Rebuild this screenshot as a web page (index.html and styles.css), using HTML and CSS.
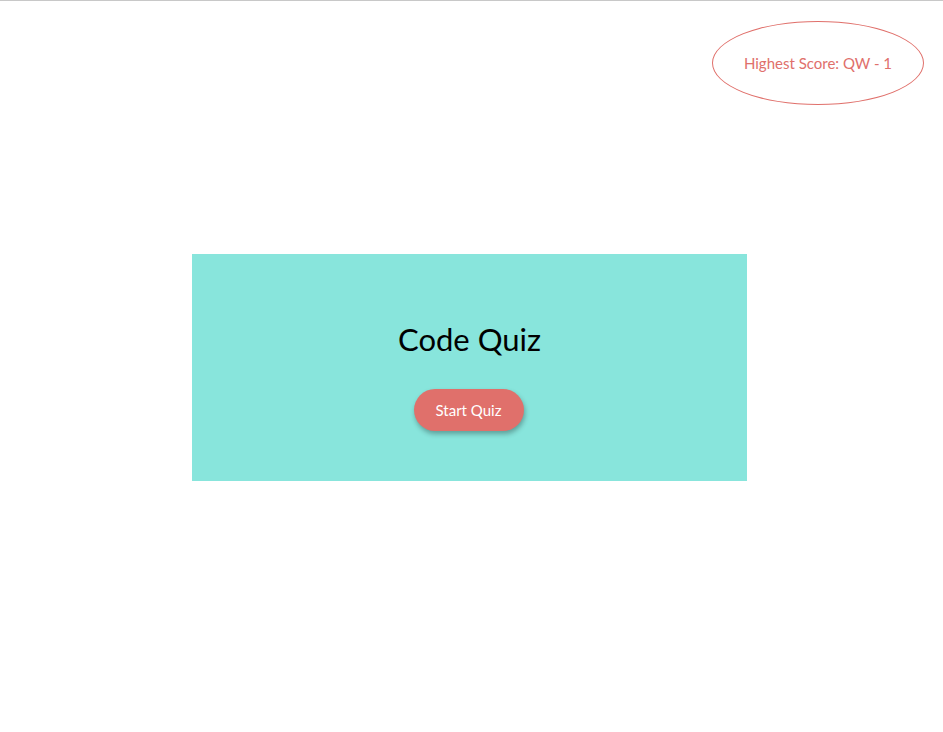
FILE: index.html
```html
<!DOCTYPE html>
<html>
<head>
<meta charset="utf-8">
<link rel="stylesheet" href="styles.css">
</head>
<body>
<header class="top">
  <div class="score">Highest Score: QW - 1</div>
</header>
<main class="stage">
  <section class="card">
    <h1 class="title">Code Quiz</h1>
    <button class="start">Start Quiz</button>
  </section>
</main>
</body>
</html>
```
FILE: styles.css
```css
html, body { margin: 0; padding: 0; background: #fff; }
body {
  border-top: 1px solid #c8c8c8;
  font-family: "Lato", "Open Sans", sans-serif;
  height: 731px;
  overflow: hidden;
}
.top {
  display: flex;
  justify-content: flex-end;
  padding: 20px 19px 0 0;
}
.score {
  width: 210px;
  height: 82px;
  border: 1px solid #e0706b;
  border-radius: 50%;
  display: flex;
  align-items: center;
  justify-content: center;
  color: #e0706b;
  font-size: 15px;
}
.stage {
  padding: 149px 0 0 192px;
}
.card {
  width: 555px;
  height: 227px;
  background: #88e5dc;
  display: flex;
  flex-direction: column;
  align-items: center;
  box-sizing: border-box;
  padding-top: 65px;
}
.title {
  margin: 0;
  font-weight: 400;
  font-size: 31px;
  line-height: 40px;
  color: #000;
}
.start {
  margin-top: 30px;
  margin-left: -2px;
  width: 110px;
  height: 42px;
  border: none;
  border-radius: 21px;
  background: #e0706b;
  color: #fff;
  font-family: inherit;
  font-size: 15px;
  box-shadow: 1px 3px 5px rgba(0,0,0,0.3);
}
```
